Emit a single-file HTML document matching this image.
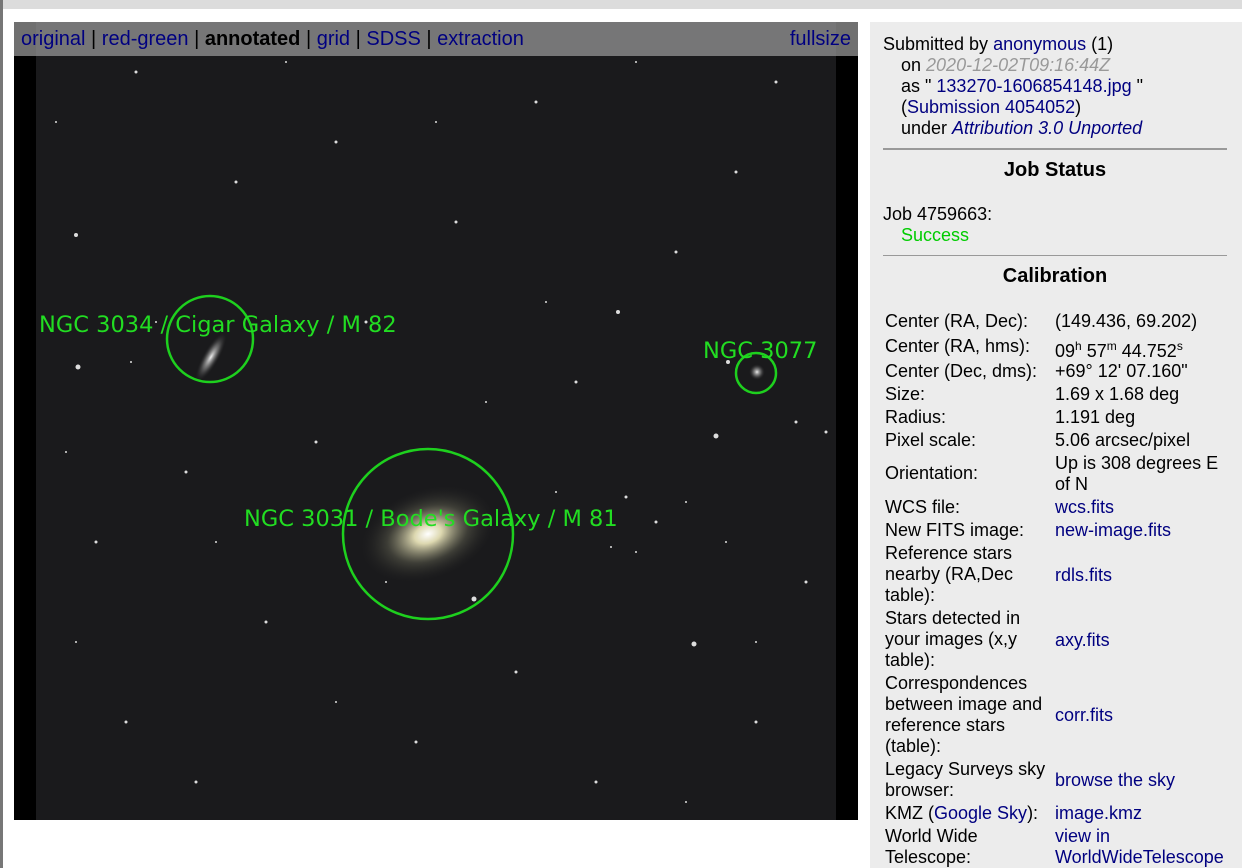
<!DOCTYPE html>
<html><head><style>
body{margin:0;width:1242px;height:868px;overflow:hidden;background:#fff;font-family:"Liberation Sans",Arial,sans-serif;font-size:18px;color:#000;position:relative}
.a{position:absolute;line-height:21px;white-space:nowrap}
.l{color:#000080}
#nav{position:absolute;left:14px;top:22px;width:844px;height:34px;background:rgba(150,150,150,.75);font-size:20px;line-height:34px}
</style></head><body>
<div style="position:absolute;left:0;top:0;width:1242px;height:9px;background:#dcdcdc"></div>
<div style="position:absolute;left:0;top:0;width:3px;height:868px;background:#777"></div>
<div style="position:absolute;left:14px;top:22px;width:844px;height:798px;background:#000"></div>
<svg style="position:absolute;left:36px;top:22px" width="800" height="798">
<defs><radialGradient id="g1"><stop offset="0" stop-color="#fff"/><stop offset=".2" stop-color="#ddd8b0"/><stop offset=".6" stop-color="#555548" stop-opacity=".6"/><stop offset="1" stop-color="#222" stop-opacity="0"/></radialGradient>
<radialGradient id="g2"><stop offset="0" stop-color="#eee"/><stop offset=".5" stop-color="#888" stop-opacity=".6"/><stop offset="1" stop-color="#222" stop-opacity="0"/></radialGradient></defs>
<rect width="800" height="798" fill="#1a1a1c"/>
<g fill="#ddd">
<circle cx="40" cy="213" r="2"/><circle cx="42" cy="345" r="2.5"/><circle cx="582" cy="290" r="2"/><circle cx="692" cy="340" r="2"/><circle cx="680" cy="414" r="2.5"/><circle cx="658" cy="622" r="2.5"/><circle cx="438" cy="577" r="2.5"/><circle cx="100" cy="50" r="1.5"/><circle cx="300" cy="120" r="1.5"/><circle cx="500" cy="80" r="1.5"/><circle cx="700" cy="150" r="1.5"/><circle cx="760" cy="400" r="1.5"/><circle cx="150" cy="450" r="1.5"/><circle cx="230" cy="600" r="1.5"/><circle cx="90" cy="700" r="1.5"/><circle cx="380" cy="720" r="1.5"/><circle cx="560" cy="760" r="1.5"/><circle cx="720" cy="700" r="1.5"/><circle cx="620" cy="500" r="1.5"/><circle cx="540" cy="360" r="1.5"/><circle cx="330" cy="300" r="1.5"/><circle cx="420" cy="200" r="1.5"/><circle cx="200" cy="160" r="1.5"/><circle cx="60" cy="520" r="1.5"/><circle cx="770" cy="560" r="1.5"/><circle cx="480" cy="650" r="1.5"/><circle cx="280" cy="420" r="1.5"/><circle cx="640" cy="230" r="1.5"/><circle cx="160" cy="760" r="1.5"/><circle cx="740" cy="60" r="1.5"/><circle cx="20" cy="100" r="1"/><circle cx="250" cy="40" r="1"/><circle cx="600" cy="40" r="1"/><circle cx="350" cy="560" r="1"/><circle cx="520" cy="470" r="1"/><circle cx="120" cy="300" r="1"/><circle cx="690" cy="520" r="1"/><circle cx="40" cy="620" r="1"/><circle cx="300" cy="680" r="1"/><circle cx="650" cy="780" r="1"/>
<circle cx="590" cy="475" r="1.5"/><circle cx="575" cy="525" r="1"/><circle cx="600" cy="530" r="1"/><circle cx="95" cy="340" r="1"/><circle cx="790" cy="410" r="1.5"/><circle cx="720" cy="620" r="1"/><circle cx="650" cy="480" r="1"/><circle cx="450" cy="380" r="1"/><circle cx="30" cy="430" r="1"/><circle cx="180" cy="520" r="1"/><circle cx="510" cy="280" r="1"/><circle cx="400" cy="100" r="1"/>
</g>
<ellipse cx="392" cy="512" rx="70" ry="45" fill="url(#g1)" transform="rotate(-20 392 512)"/>
<ellipse cx="175" cy="335" rx="8" ry="28" fill="url(#g2)" transform="rotate(30 175 335)"/>
<circle cx="721" cy="350" r="8" fill="url(#g2)"/>
<g fill="none" stroke="#1ed01e" stroke-width="2.5"><circle cx="174" cy="317" r="43"/><circle cx="720" cy="351" r="20"/><circle cx="392" cy="512" r="85"/></g>
<g fill="#22dd22" font-family="DejaVu Sans,sans-serif" font-size="22.5"><text x="3" y="310">NGC 3034 / Cigar Galaxy / M 82</text><text x="667" y="336">NGC 3077</text><text x="208" y="504">NGC 3031 / Bode's Galaxy / M 81</text></g>
</svg>
<div id="nav"><span style="position:absolute;left:7px"><span class="l">original</span> | <span class="l">red-green</span> | <b>annotated</b> | <span class="l">grid</span> | <span class="l">SDSS</span> | <span class="l">extraction</span></span><span class="l" style="position:absolute;right:7px">fullsize</span></div>
<div style="position:absolute;left:870px;top:22px;width:372px;height:846px;background:#ececec"></div>
<div class="a" style="left:883px;top:34px">Submitted by <span class="l">anonymous</span> (1)</div>
<div class="a" style="left:901px;top:55px">on <i style="color:#999">2020-12-02T09:16:44Z</i></div>
<div class="a" style="left:901px;top:76px">as " <span class="l">133270-1606854148.jpg</span> "</div>
<div class="a" style="left:901px;top:97px">(<span class="l">Submission 4054052</span>)</div>
<div class="a" style="left:901px;top:118px">under <i class="l">Attribution 3.0 Unported</i></div>
<div style="position:absolute;left:883px;top:148px;width:344px;height:2px;background:#999"></div>
<div class="a" style="left:883px;width:344px;text-align:center;top:160px;font-size:20px;font-weight:bold">Job Status</div>
<div class="a" style="left:883px;top:204px">Job 4759663:</div>
<div class="a" style="left:901px;top:225px;color:#00cc00">Success</div>
<div style="position:absolute;left:883px;top:255px;width:344px;height:1px;background:#999"></div>
<div class="a" style="left:883px;width:344px;text-align:center;top:266px;font-size:20px;font-weight:bold">Calibration</div>
<div class="a" style="left:885px;top:311px">Center (RA, Dec):</div><div class="a" style="left:1055px;top:311px">(149.436, 69.202)</div>
<div class="a" style="left:885px;top:336px">Center (RA, hms):</div><div class="a" style="left:1055px;top:336px">09<sup style="font-size:12px">h</sup> 57<sup style="font-size:12px">m</sup> 44.752<sup style="font-size:12px">s</sup></div>
<div class="a" style="left:885px;top:361px">Center (Dec, dms):</div><div class="a" style="left:1055px;top:361px">+69° 12' 07.160"</div>
<div class="a" style="left:885px;top:384px">Size:</div><div class="a" style="left:1055px;top:384px">1.69 x 1.68 deg</div>
<div class="a" style="left:885px;top:407px">Radius:</div><div class="a" style="left:1055px;top:407px">1.191 deg</div>
<div class="a" style="left:885px;top:430px">Pixel scale:</div><div class="a" style="left:1055px;top:430px">5.06 arcsec/pixel</div>
<div class="a" style="left:885px;top:463px">Orientation:</div><div class="a" style="left:1055px;top:453px">Up is 308 degrees E<br>of N</div>
<div class="a" style="left:885px;top:497px">WCS file:</div><div class="a l" style="left:1055px;top:497px">wcs.fits</div>
<div class="a" style="left:885px;top:520px">New FITS image:</div><div class="a l" style="left:1055px;top:520px">new-image.fits</div>
<div class="a" style="left:885px;top:543px">Reference stars<br>nearby (RA,Dec<br>table):</div><div class="a l" style="left:1055px;top:565px">rdls.fits</div>
<div class="a" style="left:885px;top:608px">Stars detected in<br>your images (x,y<br>table):</div><div class="a l" style="left:1055px;top:630px">axy.fits</div>
<div class="a" style="left:885px;top:673px">Correspondences<br>between image and<br>reference stars<br>(table):</div><div class="a l" style="left:1055px;top:705px">corr.fits</div>
<div class="a" style="left:885px;top:759px">Legacy Surveys sky<br>browser:</div><div class="a l" style="left:1055px;top:770px">browse the sky</div>
<div class="a" style="left:885px;top:803px">KMZ (<span class="l">Google Sky</span>):</div><div class="a l" style="left:1055px;top:803px">image.kmz</div>
<div class="a" style="left:885px;top:826px">World Wide<br>Telescope:</div><div class="a l" style="left:1055px;top:826px">view in<br>WorldWideTelescope</div>
</body></html>
